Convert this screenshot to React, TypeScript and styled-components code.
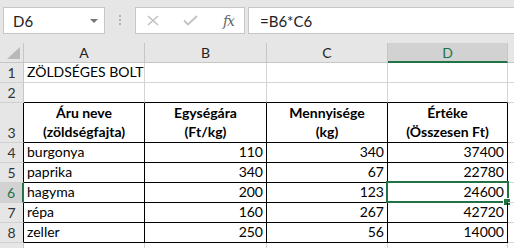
import * as React from "react";
import styled, { createGlobalStyle, css } from "styled-components";

const GlobalStyle = createGlobalStyle`
  html, body {
    margin: 0;
    padding: 0;
    background: #ffffff;
    overflow: hidden;
  }
  body {
    font-family: Lato, "Liberation Sans", sans-serif;
    font-size: 14px;
    color: #000;
  }
`;

const Page = styled.div`
  width: 514px;
  height: 248px;
  overflow: hidden;
`;

const Toolbar = styled.div`
  display: flex;
  align-items: flex-start;
  height: 43px;
  padding-top: 7px;
  box-sizing: border-box;
  background: #e6e6e6;
`;

const NameBox = styled.div`
  display: flex;
  align-items: center;
  justify-content: space-between;
  margin-left: 3px;
  width: 102px;
  height: 27px;
  box-sizing: border-box;
  padding: 0 6px 0 9px;
  background: #fff;
  border: 1px solid #c6c6c6;
  font-size: 15px;
  color: #222;
`;

const Caret = styled.span`
  width: 0;
  height: 0;
  border-left: 4px solid transparent;
  border-right: 4px solid transparent;
  border-top: 4px solid #767676;
`;

const Grip = styled.div`
  display: flex;
  flex-direction: column;
  align-items: center;
  gap: 2px;
  width: 30px;
  padding-top: 8px;
  span {
    width: 2px;
    height: 2px;
    background: #b4b4b4;
  }
`;

const FuncBox = styled.div`
  display: flex;
  align-items: center;
  justify-content: space-between;
  width: 110px;
  height: 27px;
  box-sizing: border-box;
  padding: 0 10px 0 11px;
  background: #fff;
  border: 1px solid #c6c6c6;
`;

const Fx = styled.span`
  font-family: "DejaVu Serif", "Liberation Serif", serif;
  font-style: italic;
  font-size: 14px;
  color: #666;
  letter-spacing: -1px;
`;

const FormulaBox = styled.div`
  flex: 1;
  display: flex;
  align-items: center;
  margin-left: 3px;
  height: 27px;
  box-sizing: border-box;
  padding-left: 11px;
  background: #fff;
  border: 1px solid #c6c6c6;
  border-right: none;
  font-size: 15px;
  color: #222;
`;

const Sheet = styled.div`
  display: grid;
  grid-template-columns: 24px 121px 122px 121px 120px 1fr;
  grid-template-rows: 20px 20px 20px 40px 20px 20px 20px 20px 20px 20px;
`;

const Corner = styled.div`
  position: relative;
  background: #e6e6e6;
  border-right: 1px solid #c6c6c6;
  border-bottom: 1px solid #c6c6c6;
  box-sizing: border-box;
  &::after {
    content: "";
    position: absolute;
    right: 3px;
    bottom: 3px;
    width: 0;
    height: 0;
    border-left: 13px solid transparent;
    border-bottom: 12px solid #b9b9b9;
  }
`;

const ColHead = styled.div<{ $active?: boolean }>`
  display: flex;
  align-items: center;
  justify-content: center;
  box-sizing: border-box;
  background: ${(p) => (p.$active ? "#d2d2d2" : "#e6e6e6")};
  color: ${(p) => (p.$active ? "#217346" : "#222")};
  border-right: 1px solid #c6c6c6;
  border-bottom: ${(p) => (p.$active ? "2px solid #217346" : "1px solid #c6c6c6")};
  font-size: 14px;
`;

const RowHead = styled.div<{ $active?: boolean; $table?: boolean }>`
  display: flex;
  align-items: flex-end;
  justify-content: center;
  box-sizing: border-box;
  padding-bottom: 1px;
  background: ${(p) => (p.$active ? "#d2d2d2" : "#e6e6e6")};
  color: ${(p) => (p.$active ? "#217346" : "#333")};
  border-bottom: 1px solid #d0d0d0;
  border-right: ${(p) =>
    p.$active ? "2px solid #217346" : p.$table ? "1px solid #000" : "1px solid #c6c6c6"};
  font-size: 14px;
`;

const Cell = styled.div<{
  $align?: "left" | "right" | "center";
  $bold?: boolean;
  $right?: boolean;
  $bottom?: boolean;
  $selected?: boolean;
}>`
  position: relative;
  display: flex;
  flex-direction: column;
  justify-content: flex-end;
  align-items: ${(p) =>
    p.$align === "right" ? "flex-end" : p.$align === "center" ? "center" : "flex-start"};
  box-sizing: border-box;
  padding: 0 3px 1px 3px;
  line-height: 19px;
  white-space: nowrap;
  font-weight: ${(p) => (p.$bold ? 700 : 400)};
  border-right: 1px solid ${(p) => (p.$right ? "#000" : "#d4d4d4")};
  border-bottom: 1px solid ${(p) => (p.$bottom ? "#000" : "#d4d4d4")};
  ${(p) =>
    p.$selected &&
    css`
      &::before {
        content: "";
        position: absolute;
        left: -2px;
        top: -2px;
        right: -2px;
        bottom: -1px;
        border: 2px solid #217346;
        pointer-events: none;
      }
      &::after {
        content: "";
        position: absolute;
        right: -3px;
        bottom: -3px;
        width: 6px;
        height: 6px;
        background: #217346;
        border-left: 1px solid #fff;
        border-top: 1px solid #fff;
      }
    `}
`;

const CrossIcon = () => (
  <svg width="12" height="11" viewBox="0 0 12 11">
    <path d="M1 1 L11 10 M11 1 L1 10" stroke="#c2c2c2" strokeWidth="1.6" fill="none" />
  </svg>
);

const CheckIcon = () => (
  <svg width="15" height="11" viewBox="0 0 15 11">
    <path d="M1 5.5 L5 9.5 L14 1" stroke="#c2c2c2" strokeWidth="1.8" fill="none" />
  </svg>
);

type Row = { name: string; price: number; qty: number; total: number };

const rows: Row[] = [
  { name: "burgonya", price: 110, qty: 340, total: 37400 },
  { name: "paprika", price: 340, qty: 67, total: 22780 },
  { name: "hagyma", price: 200, qty: 123, total: 24600 },
  { name: "répa", price: 160, qty: 267, total: 42720 },
  { name: "zeller", price: 250, qty: 56, total: 14000 },
];

const columns = ["A", "B", "C", "D"];

export default function App() {
  return (
    <Page>
      <GlobalStyle />
      <Toolbar>
        <NameBox>
          <span>D6</span>
          <Caret />
        </NameBox>
        <Grip>
          <span />
          <span />
          <span />
        </Grip>
        <FuncBox>
          <CrossIcon />
          <CheckIcon />
          <Fx>fx</Fx>
        </FuncBox>
        <FormulaBox>=B6*C6</FormulaBox>
      </Toolbar>
      <Sheet>
        <Corner />
        {columns.map((c) => (
          <ColHead key={c} $active={c === "D"}>
            {c}
          </ColHead>
        ))}
        <ColHead />

        <RowHead>1</RowHead>
        <Cell>ZÖLDSÉGES BOLT</Cell>
        <Cell />
        <Cell />
        <Cell />
        <Cell />

        <RowHead>2</RowHead>
        <Cell $bottom />
        <Cell $bottom />
        <Cell $bottom />
        <Cell $bottom />
        <Cell />

        <RowHead $table>3</RowHead>
        <Cell $align="center" $bold $right $bottom>
          <span>Áru neve</span>
          <span>(zöldségfajta)</span>
        </Cell>
        <Cell $align="center" $bold $right $bottom>
          <span>Egységára</span>
          <span>(Ft/kg)</span>
        </Cell>
        <Cell $align="center" $bold $right $bottom>
          <span>Mennyisége</span>
          <span>(kg)</span>
        </Cell>
        <Cell $align="center" $bold $right $bottom>
          <span>Értéke</span>
          <span>(Összesen Ft)</span>
        </Cell>
        <Cell />

        {rows.map((r, i) => {
          const n = i + 4;
          return (
            <React.Fragment key={r.name}>
              <RowHead $table $active={n === 6}>
                {n}
              </RowHead>
              <Cell $right $bottom>
                {r.name}
              </Cell>
              <Cell $align="right" $right $bottom>
                {r.price}
              </Cell>
              <Cell $align="right" $right $bottom>
                {r.qty}
              </Cell>
              <Cell $align="right" $right $bottom $selected={n === 6}>
                {r.total}
              </Cell>
              <Cell />
            </React.Fragment>
          );
        })}

        <RowHead />
        <Cell />
        <Cell />
        <Cell />
        <Cell />
        <Cell />
      </Sheet>
    </Page>
  );
}
